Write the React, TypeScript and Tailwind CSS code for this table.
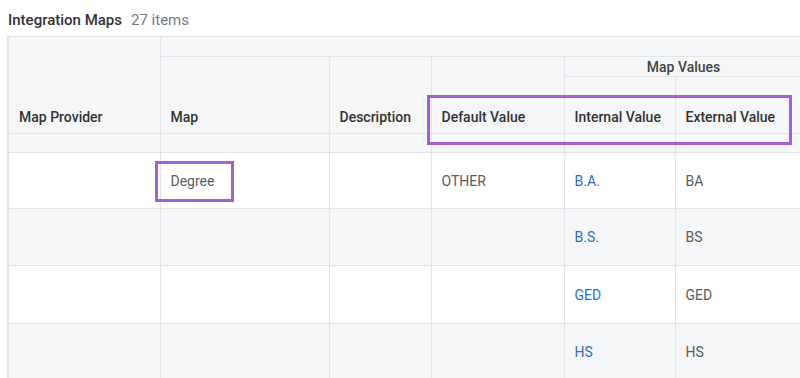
import React from "react";

const F = { fontFamily: "Roboto, 'Liberation Sans', sans-serif" };

export default function App() {
  const bodyRows = [
    { map: "Degree", def: "OTHER", internal: "B.A.", external: "BA", bg: "bg-white", h: "h-[56px]" },
    { map: "", def: "", internal: "B.S.", external: "BS", bg: "bg-[#f5f6f7]", h: "h-[57px]" },
    { map: "", def: "", internal: "GED", external: "GED", bg: "bg-white", h: "h-[58px]" },
    { map: "", def: "", internal: "HS", external: "HS", bg: "bg-[#f5f6f7]", h: "h-[57px]" },
  ];
  const cell = "border border-[#e2e4e8] px-[10px] align-middle";
  const th = "border border-[#e2e4e8] px-[10px] align-bottom pb-[6px] text-left font-medium text-[#333333]";
  return (
    <div className="w-[800px] h-[378px] overflow-hidden bg-white relative text-[14px] leading-[20px]" style={F}>
      <div className="pl-[8px] pt-[10px] h-[36px] flex items-baseline gap-[9px]">
        <span className="font-medium text-[#333333] text-[15px]">Integration Maps</span>
        <span className="text-[#747a83] text-[15px]">27 items</span>
      </div>
      <div className="pl-[7px]">
        <table className="table-fixed border-collapse w-[799px] border-l-2 border-l-[#e2e4e8]">
          <colgroup>
            <col className="w-[152px]" />
            <col className="w-[169px]" />
            <col className="w-[102px]" />
            <col className="w-[133px]" />
            <col className="w-[111px]" />
            <col className="w-[132px]" />
          </colgroup>
          <thead className="bg-[#f5f6f7]">
            <tr className="h-[20px]">
              <th rowSpan={3} className={th}>Map Provider</th>
              <th colSpan={5} className="border border-[#e2e4e8]"></th>
            </tr>
            <tr className="h-[20px]">
              <th rowSpan={2} className={th}>Map</th>
              <th rowSpan={2} className={th}>Description</th>
              <th rowSpan={2} className={th}>Default Value</th>
              <th colSpan={2} className="border border-[#e2e4e8] font-medium text-[#444444] text-center align-middle leading-[18px]">
                <span className="relative left-[-2px]">Map Values</span>
              </th>
            </tr>
            <tr className="h-[57px]">
              <th className={th}>Internal Value</th>
              <th className={th}>External Value</th>
            </tr>
            <tr className="h-[19px]">
              <td className="border border-[#e2e4e8]"></td>
              <td className="border border-[#e2e4e8]"></td>
              <td className="border border-[#e2e4e8]"></td>
              <td className="border border-[#e2e4e8]"></td>
              <td className="border border-[#e2e4e8]"></td>
              <td className="border border-[#e2e4e8]"></td>
            </tr>
          </thead>
          <tbody>
            {bodyRows.map((r, i) => (
              <tr key={i} className={`${r.bg} ${r.h}`}>
                <td className={cell}></td>
                <td className={`${cell} text-[#5c5c5c]`}>{r.map}</td>
                <td className={cell}></td>
                <td className={`${cell} text-[#5c5c5c]`}>{r.def}</td>
                <td className={`${cell} text-[#2d6fc0]`}>{r.internal}</td>
                <td className={`${cell} text-[#5c5c5c]`}>{r.external}</td>
              </tr>
            ))}
          </tbody>
        </table>
      </div>
      <div className="absolute left-[155px] top-[161px] w-[79px] h-[41px] border-[3px] border-[#a45fd5]"></div>
      <div className="absolute left-[427px] top-[95px] w-[365px] h-[50px] border-[3px] border-[#a45fd5]"></div>
    </div>
  );
}
